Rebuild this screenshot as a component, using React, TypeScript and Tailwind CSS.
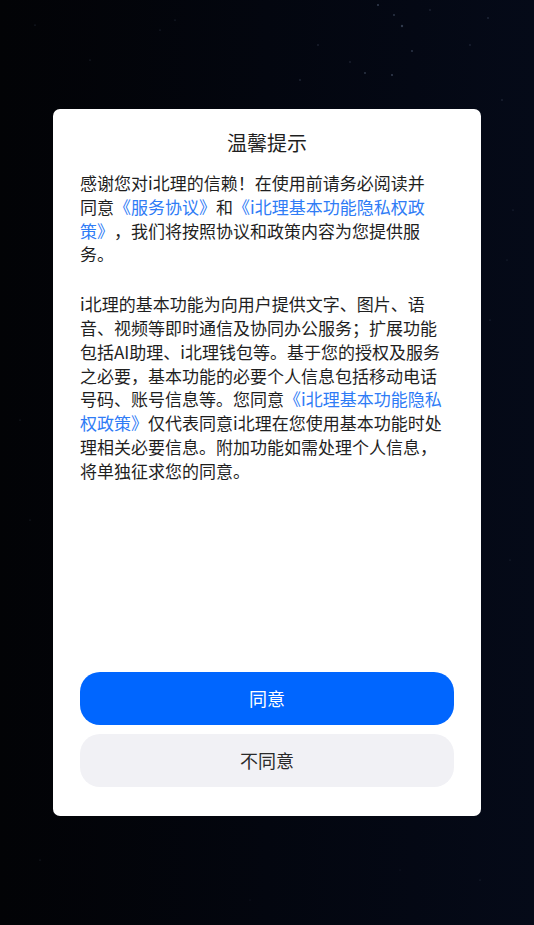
import React from 'react';

const stars = [
  [378, 5, 1.1], [394, 15, 0.9], [402, 26, 1.2], [365, 73, 0.9], [392, 75, 1.1], [300, 80, 0.8],
  [412, 51, 0.9], [430, 10, 0.7], [488, 18, 0.8], [470, 45, 0.7], [90, 60, 0.6], [35, 25, 0.6],
  [160, 30, 0.6], [175, 20, 0.6], [318, 45, 0.7], [350, 62, 0.7], [502, 100, 0.7], [513, 210, 0.6],
  [490, 320, 0.6], [507, 260, 0.5], [20, 420, 0.5], [30, 520, 0.5], [510, 560, 0.5], [40, 860, 0.5],
  [480, 880, 0.5], [250, 900, 0.4], [400, 870, 0.4],
];

const Link: React.FC<{ children: React.ReactNode }> = ({ children }) => (
  <span className="text-[#2f7cf6]">{children}</span>
);

export default function App() {
  return (
    <div
      className="relative flex h-[925px] w-full items-center justify-center overflow-hidden bg-gradient-to-r from-[#020306] via-[#03060f] to-[#050a18]"
      style={{ fontFamily: '"Noto Sans CJK SC", "Noto Sans", sans-serif' }}
    >
      {/* star field */}
      <svg className="absolute inset-0 h-full w-full" viewBox="0 0 534 925">
        {stars.map(([x, y, r], i) => (
          <circle key={i} cx={x} cy={y} r={r} fill="#5d6b85" opacity={0.5} />
        ))}
      </svg>

      <div className="relative flex h-[707px] w-[428px] flex-col rounded-[7px] bg-white px-[27px] pt-[20px] pb-[29px]">
        <h1 className="text-center text-[20px] leading-[28px] text-[#1f1f1f]">温馨提示</h1>

        <div className="mt-[14px] w-[365px] text-[17px] leading-[1.4] text-[#1f1f1f] [text-spacing-trim:space-all]">
          <p>
            感谢您对i北理的信赖！在使用前请务必阅读并
            <br />
            同意<Link>《服务协议》</Link>和<Link>《i北理基本功能隐私权政策》</Link>，我们将按照协议和政策内容为您提供服务。
          </p>
          <p className="mt-[26px]">
            i北理的基本功能为向用户提供文字、图片、语音、视频等即时通信及协同办公服务；扩展功能包括AI助理、i北理钱包等。基于您的授权及服务之必要，基本功能的必要个人信息包括移动电话号码、账号信息等。您同意<Link>《i北理基本功能隐私权政策》</Link>仅代表同意i北理在您使用基本功能时处理相关必要信息。附加功能如需处理个人信息，将单独征求您的同意。
          </p>
        </div>

        <div className="mt-auto flex flex-col gap-[9px]">
          <button className="h-[53px] w-full rounded-[20px] bg-[#0066ff] text-[18px] text-white">
            同意
          </button>
          <button className="h-[53px] w-full rounded-[20px] bg-[#f1f1f5] text-[18px] text-[#2a2a2a]">
            不同意
          </button>
        </div>
      </div>
    </div>
  );
}
